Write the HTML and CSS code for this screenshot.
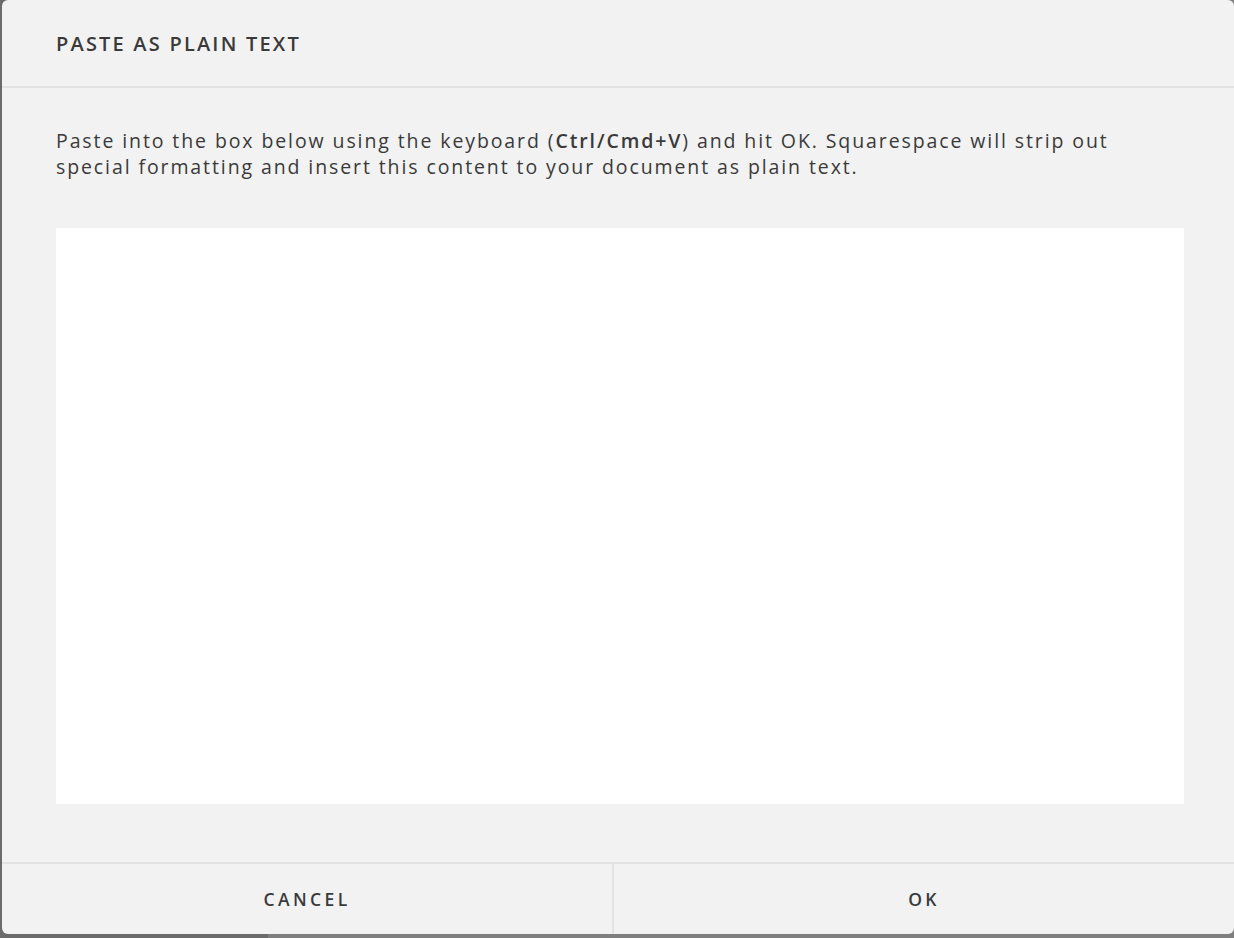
FILE: index.html
```html
<!DOCTYPE html>
<html>
<head>
<meta charset="utf-8">
<link rel="stylesheet" href="styles.css">
</head>
<body>
<div class="dialog">
  <div class="header"><h1 class="title">PASTE AS PLAIN TEXT</h1></div>
  <div class="content">
    <p class="desc">Paste into the box below using the keyboard (<strong>Ctrl/Cmd+V</strong>) and hit OK. Squarespace will strip out special formatting and insert this content to your document as plain text.</p>
    <textarea class="box"></textarea>
  </div>
  <div class="footer">
    <button class="btn btn-cancel">CANCEL</button>
    <button class="btn btn-ok">OK</button>
  </div>
</div>
</body>
</html>
```
FILE: styles.css
```css
html, body {
  margin: 0;
  padding: 0;
  height: 100%;
  overflow: hidden;
}
body {
  background: linear-gradient(to right, #6b6b6b 268px, #7f7f7f 268px);
  font-family: "Open Sans", "Noto Sans", sans-serif;
  color: #3a3a3a;
}
.dialog {
  margin-left: 2px;
  width: 1232px;
  height: 934px;
  background: #f2f2f2;
  border-radius: 6px;
  display: flex;
  flex-direction: column;
  overflow: hidden;
}
.header {
  height: 86px;
  border-bottom: 2px solid #e2e2e2;
  display: flex;
  align-items: center;
  padding: 0 54px;
  flex: none;
}
.title {
  margin: 0;
  font-size: 20px;
  font-weight: 600;
  letter-spacing: 2.2px;
  color: #3a3a3a;
}
.content {
  flex: 1;
  padding: 40px 48px 58px 54px;
  display: flex;
  flex-direction: column;
}
.desc {
  margin: 0 0 48px;
  max-width: 1100px;
  font-size: 19.5px;
  line-height: 26px;
  letter-spacing: 1.9px;
  height: 52px;
}
.desc strong { font-weight: 600; }
.box {
  width: 1128px;
  height: 576px;
  border: none;
  background: #fff;
  margin: 0;
  padding: 0;
  resize: none;
  outline: none;
  box-sizing: border-box;
}
.footer {
  flex: none;
  height: 70px;
  border-top: 2px solid #e2e2e2;
  display: flex;
}
.btn {
  box-sizing: border-box;
  border: none;
  background: transparent;
  font-family: "Open Sans", "Noto Sans", sans-serif;
  font-size: 17.5px;
  font-weight: 600;
  letter-spacing: 3.4px;
  color: #3a3a3a;
  cursor: pointer;
  padding: 0;
}
.btn-cancel {
  flex: 0 0 610px;
}
.btn-ok {
  flex: 1;
  border-left: 2px solid #e2e2e2;
}
```
